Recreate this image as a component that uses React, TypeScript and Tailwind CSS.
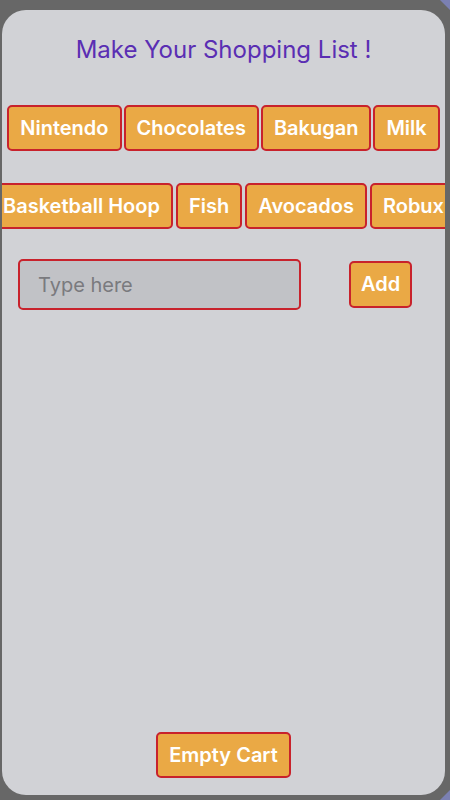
import React from "react";

const font = { fontFamily: 'Inter, "Liberation Sans", Arial, sans-serif' };

function Chip({ label }: { label: string }) {
  return (
    <button className="shrink-0 whitespace-nowrap rounded-[5px] border-2 border-[#c8222c] bg-[#eaa945] px-[11px] py-[9px] text-[20px] font-semibold leading-[24px] text-white">
      {label}
    </button>
  );
}

export default function App() {
  const row1 = ["Nintendo", "Chocolates", "Bakugan", "Milk"];
  const row2 = ["Basketball Hoop", "Fish", "Avocados", "Robux"];
  return (
    <div style={font} className="relative h-[800px] w-[450px] overflow-hidden bg-[#676767] pb-[5px] pl-[2px] pr-[5px] pt-[10px]">
      <div className="absolute right-0 top-0 h-[10px] w-[10px] bg-[#7b80b3] [clip-path:polygon(0_0,100%_0,100%_100%)]" />
      <div className="absolute bottom-0 right-0 h-[10px] w-[10px] bg-[#7b80b3] [clip-path:polygon(100%_0,100%_100%,0_100%)]" />
      <div className="relative flex h-full flex-col overflow-hidden rounded-[24px] bg-[#d1d2d6]">
        <h1 className="mt-[25px] text-center text-[24px] font-normal leading-[30px] text-[#5a2eb3]">
          Make Your Shopping List !
        </h1>
        <div className="mt-[40px] flex justify-center gap-[2px]">
          {row1.map((l) => (
            <Chip key={l} label={l} />
          ))}
        </div>
        <div className="mt-[32px] flex justify-center gap-[3px]">
          {row2.map((l) => (
            <Chip key={l} label={l} />
          ))}
        </div>
        <div className="mt-[30px] flex items-center pl-[16px]">
          <input
            placeholder="Type here"
            className="h-[51px] w-[283px] rounded-[5px] border-2 border-[#c8222c] bg-[#c1c2c6] px-[18px] text-[20px] text-black outline-none placeholder:text-[#7a7a7e]"
          />
          <button className="ml-[48px] rounded-[5px] border-2 border-[#c8222c] bg-[#eaa945] px-[10px] py-[9px] text-[20px] font-semibold leading-[25px] text-white">
            Add
          </button>
        </div>
        <div className="flex-1" />
        <div className="mb-[17px] flex justify-center">
          <Chip label="Empty Cart" />
        </div>
      </div>
    </div>
  );
}
